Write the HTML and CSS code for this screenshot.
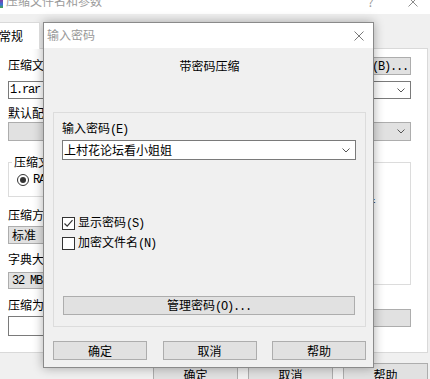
FILE: index.html
```html
<!DOCTYPE html>
<html lang="zh-CN">
<head>
    <meta charset="UTF-8">
    <meta name="viewport" content="width=device-width, initial-scale=1.0">
    <title>输入密码</title>
    <link rel="stylesheet" href="styles.css">
</head>
<body>
    <div class="window">
        <div class="titlebar">
            <span class="app-icon"></span>
            <span class="title">压缩文件名和参数</span>
            <span class="title-help">?</span>
            <svg class="title-close" width="10" height="10" viewBox="0 0 10 10">
                <path d="M0.5 0.5L9.5 9.5M9.5 0.5L0.5 9.5" stroke="#8c8c8c" stroke-width="1" fill="none"/>
            </svg>
        </div>

        <div class="tabs">
            <div class="tab">常规</div>
        </div>

        <div class="tab-page">
            <div class="row-name">
                <span class="label">压缩文件名<span class="m">(A)</span></span>
                <button class="btn browse"><span>浏览<span class="m">(B)...</span></span></button>
            </div>
            <div class="combo"><span class="m">1.rar</span><svg class="chev" width="8" height="5" viewBox="0 0 8 5"><path d="M0.5 0.5L4 4L7.5 0.5" stroke="#555" fill="none"/></svg></div>

            <div class="label spaced">默认配置</div>
            <div class="combo flat tall"><span></span><svg class="chev" width="8" height="5" viewBox="0 0 8 5"><path d="M0.5 0.5L4 4L7.5 0.5" stroke="#555" fill="none"/></svg></div>

            <div class="columns">
                <div class="col">
                    <fieldset class="group">
                        <legend>压缩文件格式</legend>
                        <label class="radio"><span class="radio-dot"></span><span class="m">RAR</span></label>
                    </fieldset>
                    <div class="label after-group">压缩方式<span class="m">(C)</span></div>
                    <div class="combo flat">标准</div>
                    <div class="label after-combo">字典大小<span class="m">(I)</span></div>
                    <div class="combo flat short"><span class="m">32 MB</span></div>
                    <div class="label after-short">压缩为分卷，大小<span class="m">(V)</span></div>
                    <div class="combo tall"></div>
                </div>
                <div class="col">
                    <fieldset class="group options">
                        <legend>压缩选项</legend>
                        <label class="check-sm"><span class="box-sm"></span><span>压缩后删除原来的文件</span></label>
                        <label class="check-sm"><span class="box-sm"></span><span>创建自解压格式压缩文件</span></label>
                        <label class="check-sm"><span class="box-sm"></span><span>创建固实压缩文件</span></label>
                    </fieldset>
                    <button class="btn set-pass"><span>设置密码<span class="m">(P)...</span></span></button>
                </div>
            </div>
        </div>

        <div class="actions">
            <button class="btn">确定</button>
            <button class="btn">取消</button>
            <button class="btn">帮助</button>
        </div>
    </div>

    <div class="dialog">
        <div class="dialog-title">
            <span>输入密码</span>
            <svg class="dialog-close" width="10" height="10" viewBox="0 0 10 10">
                <path d="M0.5 0.5L9.5 9.5M9.5 0.5L0.5 9.5" stroke="#7a7a7a" stroke-width="1" fill="none"/>
            </svg>
        </div>
        <div class="dialog-body">
            <div class="heading">带密码压缩</div>

            <div class="pass-group">
                <div class="label">输入密码<span class="m">(E)</span></div>
                <div class="combo pass">
                    <span>上村花论坛看小姐姐</span>
                    <svg class="chev" width="8" height="5" viewBox="0 0 8 5"><path d="M0.5 0.5L4 4L7.5 0.5" stroke="#555" fill="none"/></svg>
                </div>

                <div class="checks">
                    <label class="check">
                        <span class="box">
                            <svg width="11" height="11" viewBox="0 0 11 11"><path d="M1.5 5.5L4.2 8.2L9.5 2.2" stroke="#333" stroke-width="1.2" fill="none"/></svg>
                        </span>
                        <span>显示密码<span class="m">(S)</span></span>
                    </label>
                    <label class="check">
                        <span class="box"></span>
                        <span>加密文件名<span class="m">(N)</span></span>
                    </label>
                </div>

                <button class="btn manage"><span>管理密码<span class="m">(O)...</span></span></button>
            </div>

            <div class="dialog-actions">
                <button class="btn">确定</button>
                <button class="btn">取消</button>
                <button class="btn">帮助</button>
            </div>
        </div>
    </div>
</body>
</html>
```

FILE: styles.css
```css
* {
    margin: 0;
    padding: 0;
    box-sizing: border-box;
}

body {
    position: relative;
    width: 430px;
    height: 379px;
    overflow: hidden;
    background: #f0f0f0;
    font-family: "Noto Sans CJK SC", "Liberation Sans", sans-serif;
    font-size: 12px;
    line-height: 16px;
    color: #000;
}

/* latin parts of the labels: narrow fixed-width like the system font */
.m {
    font-family: "Liberation Mono", monospace;
    letter-spacing: -1.2px;
}

.btn {
    display: flex;
    align-items: center;
    justify-content: center;
    background: #e1e1e1;
    border: 1px solid #adadad;
    font: inherit;
    color: #000;
    white-space: nowrap;
}

.label {
    line-height: 16px;
    white-space: nowrap;
}

/* background window */
.titlebar {
    display: flex;
    height: 14px;
    background: #fff;
    overflow: hidden;
}

.app-icon {
    width: 3px;
    height: 8px;
    background: linear-gradient(#7b3fa6, #3a6fd8 55%, #47a84b);
}

.title {
    margin: -7px 0 0 3px;
    color: #9a9a9a;
}

.title-help {
    width: 7px;
    margin: -6px 0 0 auto;
    color: #9a9a9a;
    text-align: center;
}

.title-close {
    margin: -3px 12px 0 34px;
}

.tabs {
    position: relative;
    z-index: 1;
    display: flex;
    height: 26px;
    margin-top: 8px;
}

.tab {
    width: 46px;
    height: 27px;
    margin-left: -6px;
    padding-left: 4px;
    background: #fff;
    border: 1px solid #d9d9d9;
    border-bottom: none;
    line-height: 25px;
}

.tab-page {
    height: 305px;
    margin: 0 2px 0 -1px;
    padding: 8px 16px 0 8px;
    background: #fff;
    border: 1px solid #d9d9d9;
}

.row-name {
    display: flex;
    justify-content: space-between;
    align-items: flex-end;
    height: 18px;
}

.browse {
    width: 66px;
    height: 18px;
}

.combo {
    display: flex;
    align-items: center;
    justify-content: space-between;
    height: 18px;
    margin-top: 6px;
    padding: 0 5px 0 1px;
    background: #fff;
    border: 1px solid #7a7a7a;
    white-space: nowrap;
}

.combo.flat {
    margin-top: 1px;
    padding-left: 3px;
    background: #e1e1e1;
    border-color: #adadad;
}

.combo.tall {
    height: 19px;
}

.combo.short {
    height: 17px;
    margin-top: 3px;
}

.label.spaced {
    margin-top: 6px;
}

.columns {
    display: grid;
    grid-template-columns: 1fr 1fr;
    column-gap: 16px;
}

.group {
    margin-top: 14px;
    padding: 3px 8px 8px 8px;
    border: 1px solid #dcdcdc;
}

.group legend {
    margin-left: -5px;
    padding: 0 2px;
    line-height: 14px;
}

.group.options {
    height: 130px;
}

.radio {
    display: flex;
    align-items: center;
    gap: 4px;
    height: 16px;
}

.radio-dot {
    display: flex;
    align-items: center;
    justify-content: center;
    width: 12px;
    height: 12px;
    border: 1px solid #333;
    border-radius: 50%;
}

.radio-dot::after {
    content: "";
    width: 6px;
    height: 6px;
    border-radius: 50%;
    background: #333;
}

.label.after-group {
    margin-top: 10px;
}

.label.after-combo {
    margin-top: 7px;
}

.label.after-short {
    margin-top: 8px;
}

.col .combo.tall {
    height: 20px;
    margin-top: 1px;
}

.check-sm {
    display: flex;
    align-items: center;
    gap: 4px;
    height: 20px;
    white-space: nowrap;
}

.box-sm {
    width: 13px;
    height: 13px;
    border: 1px solid #333;
    background: #fff;
}

.set-pass {
    width: 100%;
    height: 18px;
    margin-top: 24px;
}

.actions {
    display: flex;
    justify-content: flex-end;
    gap: 10px;
    margin: 10px 2px 0 0;
}

.actions .btn {
    width: 85px;
    height: 23px;
}

/* password dialog on top */
.dialog {
    position: absolute;
    left: 43px;
    top: 22px;
    display: flex;
    flex-direction: column;
    width: 331px;
    height: 346px;
    background: #f0f0f0;
    border: 1px solid #8a8a8a;
    box-shadow: 0 0 10px rgba(0, 0, 0, 0.32);
}

.dialog-title {
    display: flex;
    align-items: center;
    height: 25px;
    padding: 0 0 2px 3px;
    background: #fff;
    color: #999;
}

.dialog-close {
    margin: 2px 9px 0 auto;
}

.dialog-body {
    flex: 1;
    padding: 0 7px 0 9px;
}

.heading {
    margin-top: 10px;
    text-align: center;
}

.pass-group {
    margin-top: 38px;
    padding: 7px 9px 11px 8px;
    border: 1px solid #dcdcdc;
}

.combo.pass {
    height: 20px;
    margin-top: 2px;
    padding: 0 5px 0 1px;
}

.checks {
    margin-top: 53px;
}

.check {
    display: flex;
    align-items: center;
    gap: 3px;
    height: 20px;
}

.box {
    display: flex;
    align-items: center;
    justify-content: center;
    width: 13px;
    height: 13px;
    background: #fff;
    border: 1px solid #333;
}

.manage {
    width: calc(100% - 2px);
    height: 19px;
    margin: 43px 1px 0;
}

.dialog-actions {
    display: flex;
    justify-content: space-between;
    margin-top: 14px;
}

.dialog-actions .btn {
    width: 94px;
    height: 19px;
}
```
